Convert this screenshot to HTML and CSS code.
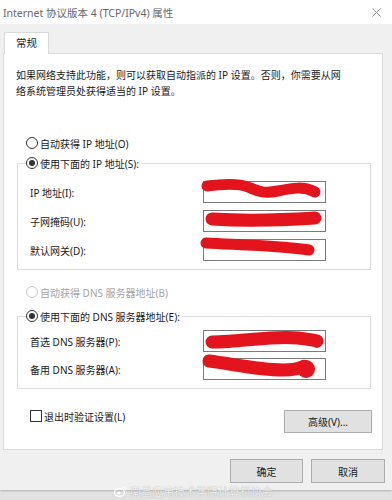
FILE: index.html
```html
<!DOCTYPE html>
<html lang="zh-CN">
<head>
<meta charset="utf-8">
<title>Internet 协议版本 4 (TCP/IPv4) 属性</title>
<link rel="stylesheet" href="styles.css">
</head>
<body>
<div class="window">
  <div class="titlebar">
    <span class="title">Internet 协议版本 4 (TCP/IPv4) 属性</span>
    <svg class="close" width="9" height="9" viewBox="0 0 9 9"><path d="M0.5 0.5 L8.5 8.5 M8.5 0.5 L0.5 8.5" stroke="#8a8a8a" stroke-width="1" fill="none"/></svg>
  </div>
  <div class="body">
    <div class="tabs"><div class="tab">常规</div></div>
    <div class="panel">
      <p class="desc">如果网络支持此功能，则可以获取自动指派的 IP 设置。否则，你需要从网<br>络系统管理员处获得适当的 IP 设置。</p>

      <div class="option first"><span class="radio"></span><span>自动获得 IP 地址(O)</span></div>
      <fieldset class="group">
        <legend class="option"><span class="radio checked"></span><span>使用下面的 IP 地址(S):</span></legend>
        <div class="fields ip">
          <div class="field"><span class="label">IP 地址(I):</span>
            <div class="input"><svg class="scribble" width="122" height="22" viewBox="0 0 122 22"><path d="M4 5 C 20 3, 35 2, 45 6 S 60 13, 75 10 S 100 5, 112 11" /></svg></div></div>
          <div class="field"><span class="label">子网掩码(U):</span>
            <div class="input"><svg class="scribble" width="122" height="22" viewBox="0 0 122 22"><path class="wide" d="M9 9 C 40 11, 80 10, 112 8" /></svg></div></div>
          <div class="field"><span class="label">默认网关(D):</span>
            <div class="input"><svg class="scribble" width="122" height="22" viewBox="0 0 122 22"><path d="M3 4 C 40 6, 80 7, 106 11" /></svg></div></div>
        </div>
      </fieldset>

      <div class="option disabled dns-auto"><span class="radio"></span><span>自动获得 DNS 服务器地址(B)</span></div>
      <fieldset class="group dns">
        <legend class="option"><span class="radio checked"></span><span>使用下面的 DNS 服务器地址(E):</span></legend>
        <div class="fields dns-fields">
          <div class="field"><span class="label">首选 DNS 服务器(P):</span>
            <div class="input"><svg class="scribble" width="122" height="22" viewBox="0 0 122 22"><path class="wide" d="M9 12 C 40 12, 70 5, 95 8 S 112 12, 114 11" /></svg></div></div>
          <div class="field"><span class="label">备用 DNS 服务器(A):</span>
            <div class="input"><svg class="scribble" width="122" height="22" viewBox="0 0 122 22"><path class="wide" d="M6 3 C 30 6, 55 12, 80 12 S 98 5, 104 10" /><circle cx="103" cy="11" r="9" /></svg></div></div>
        </div>
      </fieldset>

      <div class="footer-row">
        <label class="check"><span class="box"></span><span>退出时验证设置(L)</span></label>
        <button class="btn advanced">高级(V)...</button>
      </div>
    </div>
    <div class="actions">
      <button class="btn ok">确定</button>
      <button class="btn cancel">取消</button>
    </div>
  </div>
</div>
<div class="watermark"><svg width="13" height="11" viewBox="0 0 13 11"><ellipse cx="5.5" cy="6.5" rx="5" ry="3.8" fill="none" stroke="#fff" stroke-width="1.2"/><circle cx="5" cy="7" r="1.6" fill="#fff"/><path d="M9 1.5 A3 3 0 0 1 12 4.5" fill="none" stroke="#fff" stroke-width="1"/></svg><span>南昌应用技术学院计算机协会</span></div>
</body>
</html>
```

FILE: styles.css
```css
* { box-sizing: border-box; }

body {
  margin: 0;
  width: 392px;
  height: 500px;
  overflow: hidden;
  position: relative;
  background: #e2e2e2;
  font-family: "Segoe UI", "Noto Sans", "Noto Sans CJK SC", sans-serif;
  font-size: 10px;
  color: #1a1a1a;
}

.window {
  height: 490px;
  background: #f0f0f0;
  display: flex;
  flex-direction: column;
  box-shadow: 0 1px 2px rgba(0, 0, 0, 0.22);
}

.titlebar {
  height: 24px;
  background: #ffffff;
  display: flex;
  align-items: center;
  justify-content: space-between;
  padding-left: 3px;
  padding-right: 11px;
}

.title {
  color: #666666;
  font-size: 10.5px;
  line-height: 14px;
  margin-top: 1px;
}

.close { display: block; margin-top: 1px; }

.body {
  flex: 1;
  display: flex;
  flex-direction: column;
  padding-left: 3px;
}

.tabs {
  display: flex;
  padding-left: 1px;
  margin-top: 8px;
  height: 21px;
}

.tab {
  position: relative;
  z-index: 1;
  width: 45px;
  height: 22px;
  background: #ffffff;
  border: 1px solid #d9d9d9;
  border-bottom: none;
  text-align: center;
  line-height: 20px;
  font-size: 10.5px;
}

.panel {
  width: 380px;
  height: 397px;
  background: #ffffff;
  border: 1px solid #d9d9d9;
  display: flex;
  flex-direction: column;
}

.desc {
  margin: 13px 0 0 12px;
  line-height: 16px;
  white-space: nowrap;
}

.option {
  display: flex;
  align-items: center;
  height: 16px;
  white-space: nowrap;
}

.option.first { margin-top: 36px; padding-left: 22px; }

.radio {
  width: 12px;
  height: 12px;
  border: 1px solid #333;
  border-radius: 50%;
  margin-right: 2px;
  display: flex;
  align-items: center;
  justify-content: center;
  background: #fff;
  flex: none;
}

.radio.checked::after {
  content: "";
  width: 6px;
  height: 6px;
  border-radius: 50%;
  background: #333;
}

.option.disabled { color: #a3a3a3; }
.option.disabled .radio { border-color: #c8c8c8; }

.group {
  margin: 4px 0 0 13px;
  width: 354px;
  padding: 0;
  border: 1px solid #dcdcdc;
  min-inline-size: 0;
}

.group legend {
  margin-left: 8px;
  padding: 0 2px 0 0;
}

.fields {
  display: flex;
  flex-direction: column;
  gap: 7px;
  padding: 10px 0 8px 12px;
}

.fields.dns-fields {
  gap: 6px;
  padding-top: 6px;
}

.field {
  display: flex;
  align-items: center;
  height: 22px;
}

.label {
  width: 173px;
  white-space: nowrap;
}

.input {
  position: relative;
  width: 123px;
  height: 22px;
  border: 1px solid #7a7a7a;
  background: #fff;
}

.scribble {
  position: absolute;
  left: -1px;
  top: -1px;
  overflow: visible;
}

.scribble path {
  fill: none;
  stroke: #e3141c;
  stroke-width: 11;
  stroke-linecap: round;
  stroke-linejoin: round;
}

.scribble path.wide { stroke-width: 13; }
.scribble circle { fill: #e3141c; }

.dns-auto { margin-top: 14px; padding-left: 22px; }
.group.dns { margin-top: 8px; }

.footer-row {
  display: flex;
  justify-content: space-between;
  align-items: flex-start;
  margin-top: 21px;
  padding-left: 26px;
  padding-right: 10px;
}

.check {
  display: flex;
  align-items: center;
  height: 14px;
  margin-top: -1px;
}

.check .box {
  width: 12px;
  height: 12px;
  border: 1px solid #333;
  margin-right: 2px;
  background: #fff;
}

.btn {
  font-family: inherit;
  font-size: 10px;
  color: #1a1a1a;
  background: #e1e1e1;
  border: 1px solid #adadad;
  padding: 0;
  margin: 0;
}

.btn.advanced { width: 88px; height: 23px; }

.actions {
  display: flex;
  justify-content: flex-end;
  gap: 8px;
  margin-top: 9px;
  padding-right: 7px;
}

.btn.ok { width: 73px; height: 24px; }
.btn.cancel { width: 74px; height: 24px; }

.watermark {
  position: absolute;
  left: 114px;
  top: 485px;
  display: flex;
  align-items: center;
  gap: 3px;
  color: rgba(255, 255, 255, 0.85);
  font-size: 11px;
  line-height: 13px;
  text-shadow: 0 0 1px rgba(0, 0, 0, 0.35);
}
```
